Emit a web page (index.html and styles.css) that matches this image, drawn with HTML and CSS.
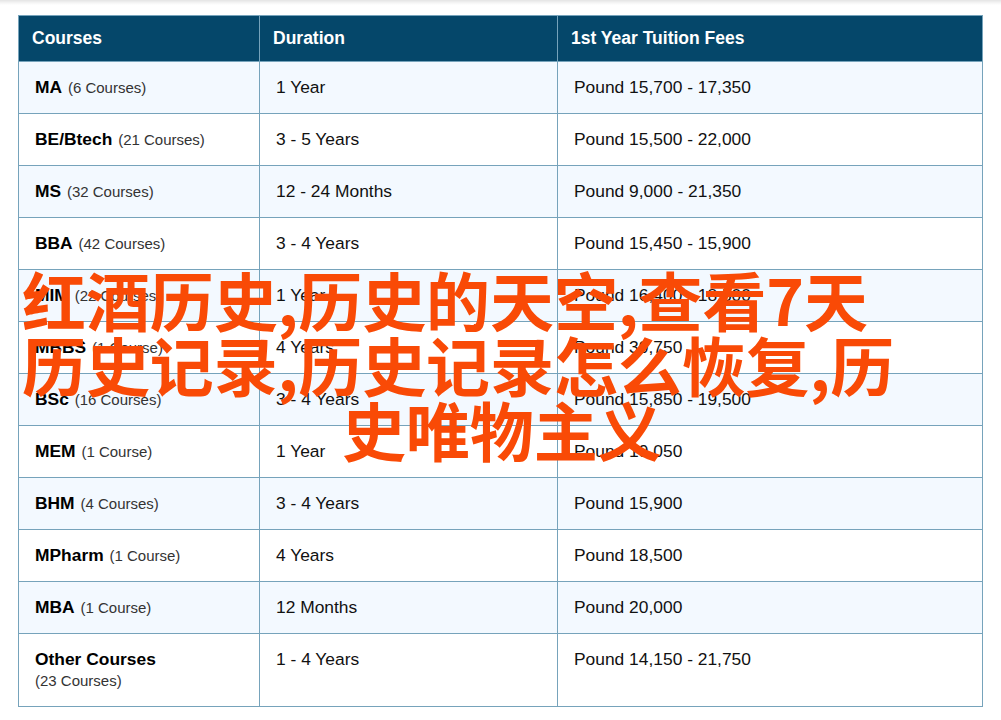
FILE: index.html
```html
<!DOCTYPE html>
<html lang="zh-CN">
<head>
<meta charset="utf-8">
<title>Courses</title>
<link rel="stylesheet" href="styles.css">
</head>
<body>
<div class="top-shade"></div>
<table class="fees">
<colgroup><col class="c1"><col class="c2"><col class="c3"></colgroup>
<thead>
<tr><th>Courses</th><th>Duration</th><th>1st Year Tuition Fees</th></tr>
</thead>
<tbody>
<tr><td><b>MA</b> <small>(6 Courses)</small></td><td>1 Year</td><td>Pound 15,700 - 17,350</td></tr>
<tr><td><b>BE/Btech</b> <small>(21 Courses)</small></td><td>3 - 5 Years</td><td>Pound 15,500 - 22,000</td></tr>
<tr><td><b>MS</b> <small>(32 Courses)</small></td><td>12 - 24 Months</td><td>Pound 9,000 - 21,350</td></tr>
<tr><td><b>BBA</b> <small>(42 Courses)</small></td><td>3 - 4 Years</td><td>Pound 15,450 - 15,900</td></tr>
<tr><td><b>MIM</b> <small>(22 Courses)</small></td><td>1 Year</td><td>Pound 16,400 - 18,500</td></tr>
<tr><td><b>MBBS</b> <small>(1 Course)</small></td><td>4 Years</td><td>Pound 30,750</td></tr>
<tr><td><b>BSc</b> <small>(16 Courses)</small></td><td>3 - 4 Years</td><td>Pound 15,850 - 19,500</td></tr>
<tr><td><b>MEM</b> <small>(1 Course)</small></td><td>1 Year</td><td>Pound 19,050</td></tr>
<tr><td><b>BHM</b> <small>(4 Courses)</small></td><td>3 - 4 Years</td><td>Pound 15,900</td></tr>
<tr><td><b>MPharm</b> <small>(1 Course)</small></td><td>4 Years</td><td>Pound 18,500</td></tr>
<tr><td><b>MBA</b> <small>(1 Course)</small></td><td>12 Months</td><td>Pound 20,000</td></tr>
<tr class="tall"><td><b>Other Courses</b><br><small>(23 Courses)</small></td><td>1 - 4 Years</td><td>Pound 14,150 - 21,750</td></tr>
</tbody>
</table>
<h1 class="headline">
<span class="line">红酒历史,历史的天空,查看7天</span>
<span class="line">历史记录,历史记录怎么恢复,历</span>
<span class="line last">史唯物主义</span>
</h1>
</body>
</html>
```
FILE: styles.css
```css
* { box-sizing: border-box; }
html, body { margin: 0; padding: 0; background: #fff; }
body {
  position: relative;
  width: 1001px;
  height: 720px;
  overflow: hidden;
  font-family: "Liberation Sans", Arial, sans-serif;
  color: #111;
}
.top-shade {
  height: 15px;
  background: linear-gradient(#e4e4e4 0, #f6f6f6 3px, #fff 5px);
}
.fees {
  width: 965px;
  margin-left: 18px;
  table-layout: fixed;
  border-collapse: collapse;
  font-size: 17.4px;
  line-height: 25px;
}
.c1 { width: 241px; }
.c2 { width: 298px; }
.c3 { width: 425px; }
.fees th, .fees td { border: 1px solid #76a3bb; text-align: left; }
.fees th {
  height: 46px;
  padding: 0 0 0 13px;
  background: #05476a;
  color: #fff;
  font-size: 17.5px;
  font-weight: 700;
}
.fees td {
  height: 52px;
  padding: 0 0 0 16px;
  vertical-align: middle;
}
.fees tbody tr:nth-child(odd) td { background: #f3f9ff; }
.fees b { color: #000; }
.fees small { font-size: 15px; color: #333; margin-left: 1px; }
.tall td { height: 73px; vertical-align: top; padding-top: 13px; }
.tall small { line-height: 18px; display: block; margin-left: 0; }
.headline {
  position: absolute;
  left: 0;
  top: 266px;
  width: 1001px;
  margin: 0;
  padding-left: 22px;
  font-family: "Noto Sans CJK SC", sans-serif;
  font-size: 64px;
  font-weight: 700;
  letter-spacing: -0.1px;
  line-height: 65px;
  color: #f94a06;
  white-space: nowrap;
}
.line { display: block; }
.last { padding-left: 320px; }
```
